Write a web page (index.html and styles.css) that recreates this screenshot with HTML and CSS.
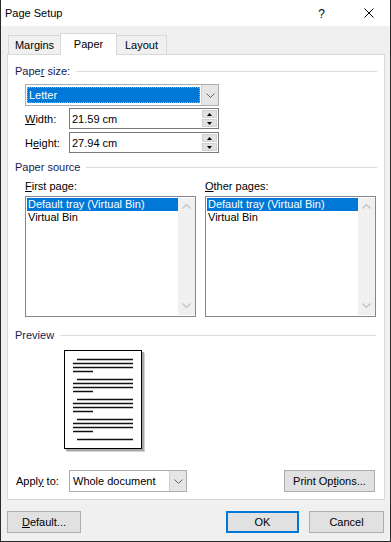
FILE: index.html
```html
<!DOCTYPE html>
<html lang="en">
<head>
    <meta charset="UTF-8">
    <title>Page Setup</title>
    <link rel="stylesheet" href="styles.css">
</head>
<body>
<div class="window">
    <!-- Title bar -->
    <div class="titlebar">
        <span class="title">Page Setup</span>
        <span class="help">?</span>
        <span class="close">
            <svg width="10" height="10" viewBox="0 0 10 10"><path d="M0.5 0.5 L9.5 9.5 M9.5 0.5 L0.5 9.5" stroke="#000" stroke-width="1"/></svg>
        </span>
    </div>

    <div class="client">
        <!-- Tabs -->
        <div class="tabs">
            <div class="tab tab-margins">Margins</div>
            <div class="tab tab-paper active">Paper</div>
            <div class="tab tab-layout">Layout</div>
        </div>

        <div class="panel">
            <!-- Paper size -->
            <div class="group-head"><span>Pape<u>r</u> size:</span><span class="rule"></span></div>
            <div class="combo paper-combo">
                <div class="combo-text"><span class="combo-sel">Letter</span></div>
                <div class="combo-btn">
                    <svg width="9" height="5" viewBox="0 0 9 5"><path d="M0.5 0.5 L4.5 4.5 L8.5 0.5" fill="none" stroke="#606060" stroke-width="1"/></svg>
                </div>
            </div>
            <div class="field-row row-width">
                <span class="field-label"><u>W</u>idth:</span>
                <div class="spin-input">
                    <span class="spin-text">21.59 cm</span>
                    <div class="spin-btns">
                        <div class="spin-btn"><svg width="5" height="3" viewBox="0 0 5 3"><path d="M0 3 L2.5 0 L5 3Z" fill="#000"/></svg></div>
                        <div class="spin-btn"><svg width="5" height="3" viewBox="0 0 5 3"><path d="M0 0 L2.5 3 L5 0Z" fill="#000"/></svg></div>
                    </div>
                </div>
            </div>
            <div class="field-row row-height">
                <span class="field-label">H<u>e</u>ight:</span>
                <div class="spin-input">
                    <span class="spin-text">27.94 cm</span>
                    <div class="spin-btns">
                        <div class="spin-btn"><svg width="5" height="3" viewBox="0 0 5 3"><path d="M0 3 L2.5 0 L5 3Z" fill="#000"/></svg></div>
                        <div class="spin-btn"><svg width="5" height="3" viewBox="0 0 5 3"><path d="M0 0 L2.5 3 L5 0Z" fill="#000"/></svg></div>
                    </div>
                </div>
            </div>

            <!-- Paper source -->
            <div class="group-head head-source"><span>Paper source</span><span class="rule"></span></div>
            <div class="source-cols">
                <div class="source-col">
                    <div class="list-label"><u>F</u>irst page:</div>
                    <div class="listbox">
                        <div class="list-items">
                            <div class="list-item selected">Default tray (Virtual Bin)</div>
                            <div class="list-item">Virtual Bin</div>
                        </div>
                        <div class="scrollbar">
                            <svg width="9" height="5" viewBox="0 0 9 5"><path d="M0.5 4.5 L4.5 0.5 L8.5 4.5" fill="none" stroke="#c2c2c2" stroke-width="1.2"/></svg>
                            <svg width="9" height="5" viewBox="0 0 9 5"><path d="M0.5 0.5 L4.5 4.5 L8.5 0.5" fill="none" stroke="#c2c2c2" stroke-width="1.2"/></svg>
                        </div>
                    </div>
                </div>
                <div class="source-col">
                    <div class="list-label"><u>O</u>ther pages:</div>
                    <div class="listbox">
                        <div class="list-items">
                            <div class="list-item selected">Default tray (Virtual Bin)</div>
                            <div class="list-item">Virtual Bin</div>
                        </div>
                        <div class="scrollbar">
                            <svg width="9" height="5" viewBox="0 0 9 5"><path d="M0.5 4.5 L4.5 0.5 L8.5 4.5" fill="none" stroke="#c2c2c2" stroke-width="1.2"/></svg>
                            <svg width="9" height="5" viewBox="0 0 9 5"><path d="M0.5 0.5 L4.5 4.5 L8.5 0.5" fill="none" stroke="#c2c2c2" stroke-width="1.2"/></svg>
                        </div>
                    </div>
                </div>
            </div>

            <!-- Preview -->
            <div class="group-head head-preview"><span>Preview</span><span class="rule"></span></div>
            <div class="preview">
                <svg width="82" height="103" viewBox="0 0 82 103">
                    <rect x="3" y="3" width="78" height="99" fill="#d2d2d2"/>
                    <rect x="2" y="2" width="78" height="99" fill="#a8a8a8"/>
                    <rect x="0.5" y="0.5" width="77" height="98" fill="#fff" stroke="#000" stroke-width="1"/>
                    <g stroke="#111" stroke-width="1.4">
                        <path d="M13 9.5 H69 M9 13.5 H69 M9 17.5 H69 M9 21.5 H29"/>
                        <path d="M13 29.5 H69 M9 33.5 H69 M9 37.5 H69 M9 41.5 H29"/>
                        <path d="M13 49.5 H69 M9 53.5 H69 M9 57.5 H69 M9 61.5 H29"/>
                        <path d="M13 69.5 H69 M9 73.5 H69 M9 77.5 H69 M9 81.5 H29"/>
                        <path d="M13 89.5 H69"/>
                    </g>
                </svg>
            </div>

            <!-- Apply to -->
            <div class="apply-row">
                <span class="apply-label">Appl<u>y</u> to:</span>
                <div class="combo apply-combo">
                    <div class="combo-text">Whole document</div>
                    <div class="combo-btn">
                        <svg width="9" height="5" viewBox="0 0 9 5"><path d="M0.5 0.5 L4.5 4.5 L8.5 0.5" fill="none" stroke="#606060" stroke-width="1"/></svg>
                    </div>
                </div>
                <div class="btn print-btn">Print Op<u>t</u>ions...</div>
            </div>
        </div>

        <!-- Dialog buttons -->
        <div class="footer">
            <div class="btn default-btn"><u>D</u>efault...</div>
            <div class="btn ok-btn">OK</div>
            <div class="btn cancel-btn">Cancel</div>
        </div>
    </div>
</div>
</body>
</html>
```

FILE: styles.css
```css
/* Global */
body {
    margin: 0;
    background: #fff;
    font-family: "Liberation Sans", Arial, sans-serif;
    font-size: 11px;
    color: #000;
}

u {
    text-underline-offset: 1px;
}

/* Window frame */
.window {
    width: 391px;
    height: 542px;
    box-sizing: border-box;
    border: 1px solid #2a2a2a;
    border-top: none;
    background: #f0f0f0;
    display: flex;
    flex-direction: column;
}

/* Title bar */
.titlebar {
    height: 26px;
    background: #fff;
    display: flex;
    align-items: center;
    padding-left: 4px;
}

.title {
    flex: 1;
}

.help {
    font-size: 12px;
    margin-right: 39px;
    margin-top: 1px;
}

.close {
    display: flex;
    margin-right: 16px;
}

/* Client area */
.client {
    flex: 1;
    display: flex;
    flex-direction: column;
    padding: 7px 5px 0 6px;
}

/* Tabs */
.tabs {
    display: flex;
    align-items: flex-end;
    padding-left: 1px;
    height: 21px;
}

.tab {
    box-sizing: border-box;
    height: 19px;
    line-height: 18px;
    text-align: center;
    border: 1px solid #d9d9d9;
    border-bottom: none;
    background: #f0f0f0;
}

.tab-margins {
    width: 52px;
    border-right: none;
}

.tab-layout {
    width: 50px;
    border-left: none;
}

.tab.active {
    width: 57px;
    height: 22px;
    line-height: 20px;
    background: #fff;
    margin-bottom: -1px;
    position: relative;
    z-index: 1;
}

/* Tab panel */
.panel {
    height: 446px;
    box-sizing: border-box;
    background: #fff;
    border: 1px solid #d9d9d9;
    display: flex;
    flex-direction: column;
    padding: 0 7px 7px 7px;
}

.group-head {
    display: flex;
    align-items: center;
    height: 14px;
    margin-top: 9px;
    color: #151c52;
}

.group-head .rule {
    flex: 1;
    height: 1px;
    background: #dcdcdc;
    margin: 1px 0 0 6px;
}

.head-source {
    margin-top: 7px;
}

.head-preview {
    margin-top: 11px;
    padding-right: 1px;
}

/* Combo boxes */
.combo {
    box-sizing: border-box;
    border: 1px solid #adadad;
    display: flex;
    background: #fff;
}

.combo-text {
    flex: 1;
    display: flex;
    align-items: center;
    padding: 0 1px;
}

.combo-btn {
    width: 16px;
    background: #e5e5e5;
    border-left: 1px solid #d0d0d0;
    display: flex;
    align-items: center;
    justify-content: center;
}

.paper-combo {
    width: 194px;
    height: 22px;
    margin: 6px 0 0 10px;
}

.combo-sel {
    flex: 1;
    height: 16px;
    line-height: 16px;
    background: #0078d7;
    color: #fff;
    padding-left: 2px;
    outline: 1px dotted #e79a3c;
    outline-offset: -1px;
}

/* Width / Height */
.field-row {
    display: flex;
    align-items: center;
    margin-left: 10px;
}

.row-width {
    margin-top: 2px;
}

.row-height {
    margin-top: 3px;
}

.field-label {
    width: 44px;
}

.spin-input {
    box-sizing: border-box;
    width: 150px;
    height: 21px;
    border: 1px solid #7a7a7a;
    display: flex;
    align-items: center;
    padding: 0 1px 0 2px;
}

.spin-text {
    flex: 1;
}

.spin-btns {
    width: 15px;
    display: flex;
    flex-direction: column;
    gap: 1px;
}

.spin-btn {
    height: 8px;
    background: #e1e1e1;
    border: 1px solid #d0d0d0;
    box-sizing: border-box;
    display: flex;
    align-items: center;
    justify-content: center;
}

/* Paper source lists */
.source-cols {
    display: flex;
    gap: 9px;
    margin: 5px 0 0 10px;
}

.source-col {
    width: 171px;
}

.list-label {
    height: 14px;
    line-height: 14px;
}

.listbox {
    box-sizing: border-box;
    height: 121px;
    margin-top: 3px;
    border: 1px solid #828790;
    display: flex;
    padding: 1px 0 1px 1px;
}

.list-items {
    flex: 1;
}

.list-item {
    height: 13px;
    line-height: 13px;
    padding-left: 1px;
}

.list-item.selected {
    background: #0078d7;
    color: #fff;
}

.scrollbar {
    width: 17px;
    background: #f0f0f0;
    display: flex;
    flex-direction: column;
    justify-content: space-between;
    align-items: center;
    padding: 6px 0 7px;
    box-sizing: border-box;
}

/* Preview */
.preview {
    margin: 8px 0 0 49px;
    display: flex;
}

/* Apply to */
.apply-row {
    margin-top: auto;
    display: flex;
    align-items: flex-end;
}

.apply-label {
    width: 53px;
    padding-left: 1px;
    align-self: center;
}

.apply-combo {
    width: 118px;
    height: 22px;
}

.apply-combo .combo-text {
    padding-left: 3px;
}

/* Buttons */
.btn {
    box-sizing: border-box;
    height: 22px;
    background: #e1e1e1;
    border: 1px solid #adadad;
    display: flex;
    align-items: center;
    justify-content: center;
}

.print-btn {
    width: 91px;
    margin-left: auto;
    margin-right: 2px;
}

.footer {
    display: flex;
    margin-top: 11px;
}

.default-btn {
    width: 74px;
    margin-right: auto;
}

.ok-btn {
    width: 73px;
    border: 2px solid #0078d7;
    margin-right: 10px;
}

.cancel-btn {
    width: 75px;
    margin-right: 1px;
}
```
